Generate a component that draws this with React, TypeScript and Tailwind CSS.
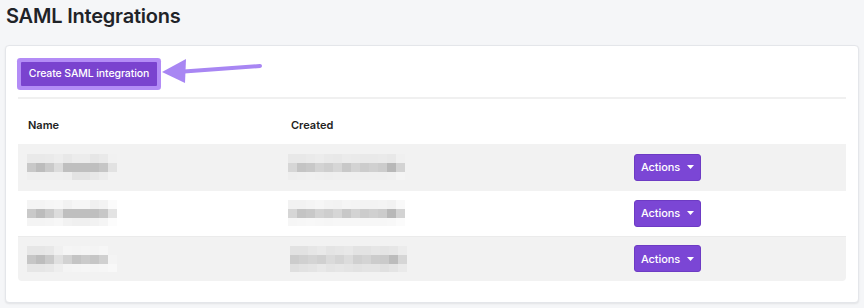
import React from 'react';

// redacted cells in the reference are pixelated; each row is a string of grey levels (hex pairs)
type Blur = { x?: number; rows: string[] };

const rows: { h: string; bg: string; name: Blur; created: Blur }[] = [
  {
    h: 'h-[47px]',
    bg: 'bg-[#f2f2f2]',
    name: {
      rows: ['e9e9eaede8ecece6e9f1', 'c8bccadcbfbfbfbfc6e2', 'efefefefeee3e3e8ecf2'],
    },
    created: {
      x: -3,
      rows: ['e8e8eaece9e8ebeae9e9eae8f0', 'd6c4c8d3ced6c8d3ccd0ccb8d3', 'eeeff0efeeefefefefefeff0f4'],
    },
  },
  {
    h: 'h-[45px]',
    bg: 'bg-white',
    name: {
      rows: ['f4f4f6f7f2f6f6f0f3fb', 'c9bccadcbfbfbfbfc7e3', 'f4f4f5f7f2f0f0f2f5fc'],
    },
    created: {
      x: -3,
      rows: ['f2f2f4f6f3f2f5f4f3f3f4f2f9', 'd6c4c8d3ced6c8d3ccd0ccb8d3', 'f6f7f8f7f6f7f7f7f7f7f7f8fb'],
    },
  },
  {
    h: 'h-[45px]',
    bg: 'bg-[#f2f2f2]',
    name: {
      rows: ['e6e6e8f0f5f4f5f4f6f2', 'c6bdcae0d2c4cbc6d0f4', 'e6e6e8eef4f5f6f5f6f8'],
    },
    created: {
      rows: ['e2e2e6e9e4e6e8e3e3e6e4e6ec', 'ccd0d4d0dad4dcd0d4cccabcd6', 'dfe2e4e8e4e6e4e2e4e4e0e4ea'],
    },
  },
];

function Pixelated({ blur }: { blur: Blur }) {
  return (
    <div className="flex flex-col" style={{ marginLeft: blur.x ?? -1 }}>
      {blur.rows.map((r, i) => (
        <div key={i} className={`flex ${i === 2 ? 'h-[8px]' : 'h-[9px]'}`}>
          {(r.match(/../g) ?? []).map((c, j) => (
            <div key={j} className="w-[9px]" style={{ backgroundColor: `#${c}${c}${c}` }} />
          ))}
        </div>
      ))}
    </div>
  );
}

function Caret() {
  return (
    <svg width="7" height="4" viewBox="0 0 7 4" className="ml-[7px] shrink-0">
      <path d="M0 0h7L3.5 4z" fill="white" />
    </svg>
  );
}

export default function App() {
  return (
    <div className="min-h-screen bg-[#f5f6f8] text-[#1f2328] font-['Inter','Liberation_Sans',sans-serif]">
      <h1 className="pl-[6px] pt-[3px] h-[45px] text-[20px] leading-[26px] font-semibold tracking-[-0.2px]">
        SAML Integrations
      </h1>

      <div className="mx-[5px] h-[258px] bg-white border border-[#e4e6ea] rounded-[4px] shadow-[0_1px_2px_rgba(0,0,0,0.08)] px-3 pt-[13px]">
        <div className="relative ml-[3px] w-fit">
          <button className="h-[24px] w-[136px] bg-[#7a43cf] text-white text-[10.5px] font-medium tracking-[-0.1px] rounded-[1px] ring-4 ring-[#b38cf6]">
            Create SAML integration
          </button>
          {/* callout arrow pointing at the button */}
          <svg
            width="104"
            height="30"
            viewBox="0 0 104 30"
            className="absolute left-[141px] top-[-2px] pointer-events-none"
          >
            <path d="M22 14.5 L98 9" stroke="#a886f3" strokeWidth="4" strokeLinecap="round" />
            <path d="M0 15 L24 2 L23 26 Z" fill="#a886f3" />
          </svg>
        </div>

        <div className="mt-[11px] h-[2px] bg-[#f0f0f0]" />

        <div className="flex h-[45px] items-end pb-[10px] text-[11px] font-semibold text-[#222]">
          <div className="w-[263px] pl-[10px]">Name</div>
          <div className="w-[343px] pl-[10px]">Created</div>
          <div className="flex-1" />
        </div>

        <div className="rounded-b-[4px] overflow-hidden">
          {rows.map((r, i) => (
            <div key={i} className={`flex items-center ${r.h} ${r.bg} ${i === 2 ? 'border-t border-[#ebebeb]' : ''}`}>
              <div className="w-[263px] pl-[10px]">
                <Pixelated blur={r.name} />
              </div>
              <div className="w-[343px] pl-[10px]">
                <Pixelated blur={r.created} />
              </div>
              <div className="flex-1 pl-[10px]">
                <button className="flex items-center justify-center h-[27px] w-[67px] bg-[#7b46d5] border border-[#6d3bc4] rounded-[3px] text-white text-[11px] font-medium tracking-[-0.1px]">
                  Actions
                  <Caret />
                </button>
              </div>
            </div>
          ))}
        </div>
      </div>
    </div>
  );
}
